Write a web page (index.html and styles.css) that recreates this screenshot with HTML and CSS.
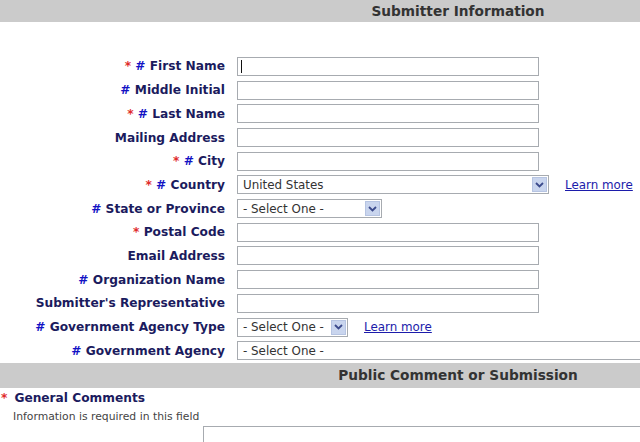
FILE: index.html
```html
<!DOCTYPE html>
<html>
<head>
<meta charset="utf-8">
<link rel="stylesheet" href="styles.css">
</head>
<body>
<div class="page">
  <div class="section-head first">Submitter Information</div>
  <div class="form">
    <div class="label"><span class="req">*</span> <span class="hash">#</span> First Name</div>
    <div class="field"><div class="input"><span class="caret"></span></div></div>

    <div class="label"><span class="hash">#</span> Middle Initial</div>
    <div class="field"><div class="input"></div></div>

    <div class="label"><span class="req">*</span> <span class="hash">#</span> Last Name</div>
    <div class="field"><div class="input"></div></div>

    <div class="label">Mailing Address</div>
    <div class="field"><div class="input"></div></div>

    <div class="label"><span class="req">*</span> <span class="hash">#</span> City</div>
    <div class="field"><div class="input"></div></div>

    <div class="label"><span class="req">*</span> <span class="hash">#</span> Country</div>
    <div class="field">
      <div class="select w-country"><span class="sel-text">United States</span><span class="arrow"><svg width="9" height="6" viewBox="0 0 9 6"><path d="M1 1 L4.5 4.5 L8 1" fill="none" stroke="#3b4a8c" stroke-width="1.8"/></svg></span></div>
      <a class="learn" href="#">Learn more</a>
    </div>

    <div class="label"><span class="hash">#</span> State or Province</div>
    <div class="field">
      <div class="select w-state"><span class="sel-text">- Select One -</span><span class="arrow"><svg width="9" height="6" viewBox="0 0 9 6"><path d="M1 1 L4.5 4.5 L8 1" fill="none" stroke="#3b4a8c" stroke-width="1.8"/></svg></span></div>
    </div>

    <div class="label"><span class="req">*</span> Postal Code</div>
    <div class="field"><div class="input"></div></div>

    <div class="label">Email Address</div>
    <div class="field"><div class="input"></div></div>

    <div class="label"><span class="hash">#</span> Organization Name</div>
    <div class="field"><div class="input"></div></div>

    <div class="label">Submitter's Representative</div>
    <div class="field"><div class="input"></div></div>

    <div class="label"><span class="hash">#</span> Government Agency Type</div>
    <div class="field">
      <div class="select w-type"><span class="sel-text">- Select One -</span><span class="arrow"><svg width="9" height="6" viewBox="0 0 9 6"><path d="M1 1 L4.5 4.5 L8 1" fill="none" stroke="#3b4a8c" stroke-width="1.8"/></svg></span></div>
      <a class="learn" href="#">Learn more</a>
    </div>

    <div class="label"><span class="hash">#</span> Government Agency</div>
    <div class="field">
      <div class="select w-agency"><span class="sel-text">- Select One -</span></div>
    </div>
  </div>
  <div class="section-head second">Public Comment or Submission</div>
  <div class="comments">
    <div class="c-label"><span class="req c-star">*</span>General Comments</div>
    <div class="c-note">Information is required in this field</div>
    <div class="textarea"></div>
  </div>
</div>
</body>
</html>
```
FILE: styles.css
```css
html, body {
  margin: 0;
  padding: 0;
  background: #ffffff;
}
.page {
  width: 640px;
  height: 442px;
  overflow: hidden;
  font-family: "DejaVu Sans", Verdana, sans-serif;
}
.section-head {
  background: #cbcbcb;
  color: #333333;
  font-weight: bold;
  font-size: 13.7px;
  text-align: center;
  padding-left: 276px;
}
.section-head.first {
  height: 22px;
  line-height: 22px;
}
.section-head.second {
  height: 25px;
  line-height: 25px;
}
.form {
  display: grid;
  grid-template-columns: 225px 1fr;
  column-gap: 12px;
  grid-auto-rows: 23.7px;
  padding-top: 32.6px;
  align-items: center;
}
.label {
  text-align: right;
  font-weight: bold;
  font-size: 12.2px;
  color: #1b1b5e;
  white-space: nowrap;
}
.req {
  color: #e02b2b;
}
.hash {
  color: #1212c4;
}
.field {
  display: flex;
  align-items: center;
  gap: 16px;
  height: 19px;
}
.input {
  box-sizing: border-box;
  width: 302px;
  height: 19px;
  border: 1px solid #a7abb0;
  background: #fff;
  position: relative;
}
.caret {
  position: absolute;
  left: 3px;
  top: 2px;
  width: 1px;
  height: 13px;
  background: #111;
}
.select {
  box-sizing: border-box;
  height: 19px;
  border: 1px solid #a7abb0;
  background: #fff;
  display: flex;
  align-items: center;
  justify-content: space-between;
  padding-left: 5px;
  padding-right: 1px;
  font-size: 11.9px;
  color: #333;
  flex-shrink: 0;
}
.w-country { width: 312px; }
.w-state { width: 145px; }
.w-type { width: 111px; }
.w-agency { width: 420px; }
.arrow {
  width: 15px;
  height: 15px;
  box-sizing: border-box;
  background: #c9d5ee;
  border: 1px solid #b6c4e2;
  display: flex;
  align-items: center;
  justify-content: center;
}
.arrow svg {
  display: block;
}
.learn {
  font-size: 11.9px;
  color: #1c1cab;
  text-decoration: underline;
  white-space: nowrap;
}
.c-label {
  font-weight: bold;
  font-size: 12.2px;
  color: #1b1b5e;
  padding-top: 3px;
  padding-left: 1px;
  line-height: 15px;
}
.c-star {
  margin-right: 7px;
}
.c-note {
  font-size: 10.8px;
  color: #444;
  padding-left: 13px;
  padding-top: 4px;
  line-height: 13px;
}
.textarea {
  box-sizing: border-box;
  margin-left: 203px;
  margin-top: 3px;
  width: 460px;
  height: 40px;
  border: 1px solid #a7abb0;
}
```
